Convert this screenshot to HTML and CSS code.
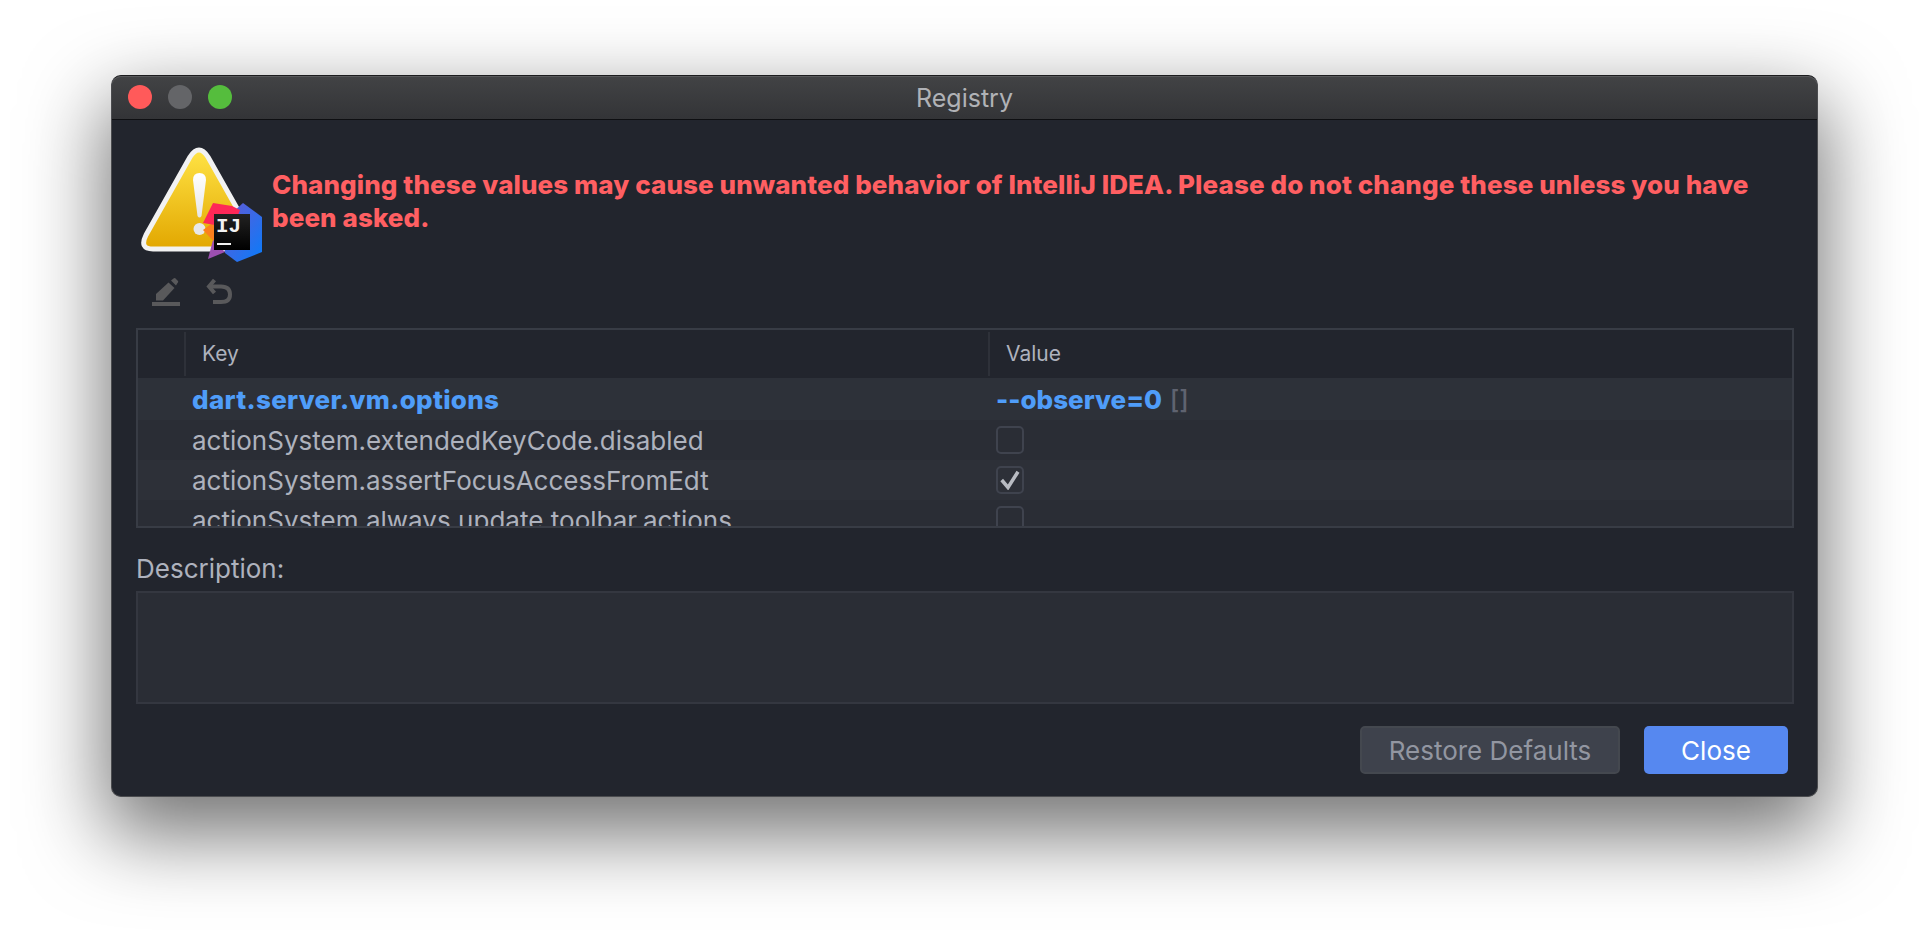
FILE: index.html
```html
<!DOCTYPE html>
<html>
<head>
  <meta charset="utf-8">
  <title>Registry</title>
  <link rel="stylesheet" href="styles.css">
</head>
<body>
  <div class="window">
    <div class="titlebar">
      <div class="lights">
        <span class="light red"></span>
        <span class="light gray"></span>
        <span class="light green"></span>
      </div>
      <div class="title">Registry</div>
    </div>
    <div class="content">
      <div class="warning">
        <div class="warn-icon">
          <svg class="triangle" width="116" height="106" viewBox="0 0 116 106">
            <defs>
              <linearGradient id="amber" x1="0" y1="0" x2="0" y2="1">
                <stop offset="0" stop-color="#ffe345"/>
                <stop offset="1" stop-color="#e2a700"/>
              </linearGradient>
              <linearGradient id="bang" x1="0" y1="0" x2="0" y2="1">
                <stop offset="0" stop-color="#ffffff"/>
                <stop offset="1" stop-color="#e6e6e6"/>
              </linearGradient>
            </defs>
            <path d="M49 10 Q58 -4 67 10 L111 88 Q118 102 104 102 L12 102 Q-2 102 5 88 Z" fill="url(#amber)" stroke="#f2f2f2" stroke-width="5" stroke-linejoin="round"/>
            <path d="M52 33 Q52 26 58.500 26 Q65 26 65 33 L60.500 69 Q58.500 72 56.500 69 Z" fill="url(#bang)"/>
            <circle cx="58.500" cy="82" r="6" fill="#e8e8e8"/>
          </svg>
          <div class="logo">
            <svg class="logo-bg" width="60" height="60" viewBox="0 0 60 60">
              <defs>
                <linearGradient id="blue" x1="0" y1="0" x2="1" y2="1">
                  <stop offset="0" stop-color="#6b57d2"/>
                  <stop offset="1" stop-color="#087cfa"/>
                </linearGradient>
              </defs>
              <path d="M40 0 L59 14 L59 49 L34 59 L22 50 L18 20 Z" fill="url(#blue)"/>
              <path d="M0 27 L12 18 L18 46 Z" fill="#fc801d"/>
              <path d="M10 37 L22 49 L5 56 Z" fill="#9c4fb0"/>
              <path d="M10 0 L29 3 L37 7 L30 25 L0 20 Z" fill="#fe2857"/>
            </svg>
            <div class="logo-box">
              <span class="logo-text">IJ</span>
              <span class="logo-bar"></span>
            </div>
          </div>
        </div>
        <div class="warn-text">Changing these values may cause unwanted behavior of IntelliJ IDEA. Please do not change these unless you have been asked.</div>
      </div>

      <div class="toolbar">
        <svg width="28" height="28" viewBox="0 0 28 28">
          <path d="M4 22.500 L4 16 L16.500 4.500 L22.500 10 L11 22.500 Z" fill="#59595b"/>
          <path d="M19 2.500 L21.500 0.500 Q23 -0.500 24 1 L26 3 Q26.500 4 25.500 5 L24 7.500 Z" fill="#59595b"/>
          <rect x="0" y="24" width="28" height="4" fill="#59595b"/>
        </svg>
        <svg width="28" height="28" viewBox="0 0 28 28">
          <path d="M8.500 2 L3 8.500 L8.500 15" fill="none" stroke="#59595b" stroke-width="4"/>
          <path d="M3 8.500 L15 8.500 Q24 8.500 24 16.500 Q24 24 15 24 L7 24" fill="none" stroke="#59595b" stroke-width="4"/>
        </svg>
      </div>

      <div class="table">
        <div class="thead">
          <div class="th th-gutter"></div>
          <div class="th th-key">Key</div>
          <div class="th th-value">Value</div>
        </div>
        <div class="tbody">
          <div class="row selected">
            <div class="cell-key">dart.server.vm.options</div>
            <div class="cell-value">--observe=0 <span class="brackets">[]</span></div>
          </div>
          <div class="row">
            <div class="cell-key">actionSystem.extendedKeyCode.disabled</div>
            <div class="cell-value"><span class="check"></span></div>
          </div>
          <div class="row alt">
            <div class="cell-key">actionSystem.assertFocusAccessFromEdt</div>
            <div class="cell-value">
              <span class="check">
                <svg width="20" height="20" viewBox="0 0 20 20"><path d="M1.700 10 L8 17.500 L18 1.700" fill="none" stroke="#b9bcc3" stroke-width="3.500"/></svg>
              </span>
            </div>
          </div>
          <div class="row">
            <div class="cell-key">actionSystem.always.update.toolbar.actions</div>
            <div class="cell-value"><span class="check"></span></div>
          </div>
        </div>
      </div>

      <div class="desc-label">Description:</div>
      <div class="desc-box"></div>

      <div class="buttons">
        <button class="btn btn-default">Restore Defaults</button>
        <button class="btn btn-primary">Close</button>
      </div>
    </div>
  </div>
</body>
</html>
```

FILE: styles.css
```css
* { box-sizing: border-box; }

html, body {
  margin: 0;
  padding: 0;
  height: 100%;
  background: #fff;
  overflow: hidden;
  font-family: Inter, "Liberation Sans", sans-serif;
}

.window {
  width: 1707px;
  height: 722px;
  margin: 75px 0 0 111px;
  border-radius: 10px;
  border: 1px solid #4b4c4f;
  border-top-color: #1c1c1e;
  background: #22252d;
  box-shadow: 0 32px 80px 6px rgba(0, 0, 0, 0.55);
}

.titlebar {
  position: relative;
  height: 44px;
  display: flex;
  align-items: center;
  justify-content: center;
  background: linear-gradient(#424345, #333437);
  border-bottom: 1px solid #0e0f12;
  border-radius: 9px 9px 0 0;
  box-shadow: inset 0 1px #58595b;
}

.lights {
  position: absolute;
  left: 16px;
  top: 9px;
  display: flex;
  gap: 16px;
}

.light {
  width: 24px;
  height: 24px;
  border-radius: 50%;
}
.red { background: #ff5a5a; }
.gray { background: #646568; }
.green { background: #55bd3d; }

.title {
  font-size: 25px;
  color: #b0b2b6;
}

.content {
  padding: 28px 24px 0 24px;
}

.warning {
  display: flex;
  height: 116px;
}

.warn-icon {
  position: relative;
  width: 136px;
  flex: none;
}

.triangle {
  position: absolute;
  left: 5px;
  top: -1px;
}

.logo {
  position: absolute;
  left: 67px;
  top: 55px;
  width: 60px;
  height: 60px;
}

.logo-bg {
  display: block;
}

.logo-box {
  position: absolute;
  left: 11px;
  top: 11px;
  width: 36px;
  height: 36px;
  background: linear-gradient(#222, #000);
}

.logo-text {
  position: absolute;
  left: 2px;
  top: 2px;
  font-family: "Liberation Mono", monospace;
  font-size: 21px;
  font-weight: bold;
  line-height: 22px;
  color: #f2f2f2;
}

.logo-bar {
  position: absolute;
  left: 3px;
  top: 29px;
  width: 14px;
  height: 2px;
  background: #f2f2f2;
}

.warn-text {
  margin-top: 20px;
  width: 1500px;
  font-size: 26px;
  line-height: 33px;
  font-weight: 800;
  letter-spacing: 0.1px;
  color: #ff5f62;
}

.toolbar {
  display: flex;
  gap: 26px;
  height: 28px;
  margin: 14px 0 22px 16px;
}

.table {
  width: 1658px;
  border: 2px solid #383c45;
  height: 200px;
  overflow: hidden;
}

.thead {
  display: flex;
  height: 48px;
  align-items: center;
  background: #22252d;
  font-size: 21px;
  color: #aeb2bd;
}

.th {
  height: 44px;
  line-height: 44px;
  padding-left: 16px;
  border-right: 2px solid #2e3139;
}

.th-gutter { width: 48px; padding: 0; }
.th-key { width: 804px; }
.th-value { flex: 1; border-right: none; }

.tbody {
  background: #2a2d35;
}

.row {
  display: flex;
  align-items: center;
  height: 40px;
  font-size: 26px;
  color: #aeb2bd;
  white-space: nowrap;
}

.row.selected {
  height: 42px;
  background: #2d3139;
  font-weight: 800;
  color: #4f9df9;
}

.row.selected .cell-key {
  letter-spacing: 0.3px;
}

.brackets {
  font-weight: 500;
  color: #5f6370;
  margin-left: 2px;
}

.cell-key {
  width: 858px;
  padding-left: 54px;
  flex: none;
}

.row.alt {
  background: #2d3038;
}

.check {
  display: flex;
  align-items: center;
  justify-content: center;
  width: 28px;
  height: 28px;
  border: 2px solid #3f434e;
  border-radius: 5px;
}

.desc-label {
  margin-top: 27px;
  font-size: 26px;
  line-height: 27px;
  color: #aeb2bd;
}

.desc-box {
  width: 1658px;
  height: 113px;
  margin-top: 9px;
  background: #2a2d35;
  border: 2px solid #343740;
}

.buttons {
  display: flex;
  justify-content: flex-end;
  gap: 24px;
  width: 1652px;
  margin-top: 22px;
}

.btn {
  height: 48px;
  border: none;
  border-radius: 5px;
  font-family: Inter, "Liberation Sans", sans-serif;
  font-size: 26px;
}

.btn-default {
  width: 260px;
  background: #3e424c;
  border: 2px solid #44484f;
  color: #9296a1;
}

.btn-primary {
  width: 144px;
  background: #5688f0;
  color: #fff;
}
```
